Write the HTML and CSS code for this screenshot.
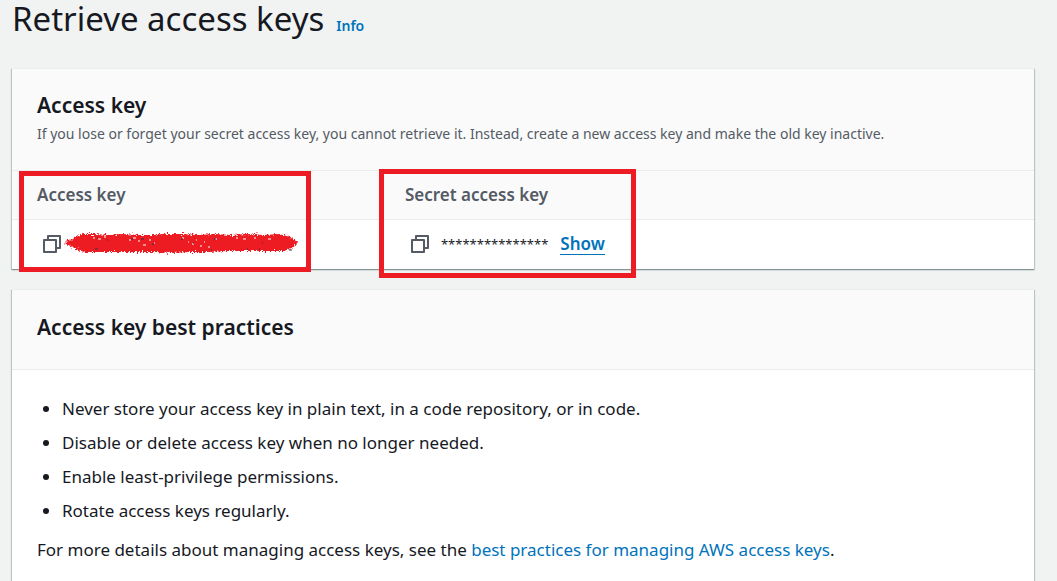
FILE: index.html
```html
<!DOCTYPE html>
<html lang="en">
<head>
<meta charset="utf-8">
<meta name="viewport" content="width=device-width, initial-scale=1">
<title>Retrieve access keys</title>
<link rel="stylesheet" href="styles.css">
</head>
<body>
<main class="page">
  <header class="page-header">
    <h1 class="page-title">Retrieve access keys</h1>
    <a class="info-link" href="#info">Info</a>
  </header>

  <section class="panel">
    <header class="panel-header">
      <h2 class="panel-title">Access key</h2>
      <p class="panel-description">If you lose or forget your secret access key, you cannot retrieve it. Instead, create a new access key and make the old key inactive.</p>
    </header>
    <table class="keys">
      <thead>
        <tr>
          <th class="key-column" scope="col">Access key<span class="highlight highlight-access"></span></th>
          <th scope="col">Secret access key<span class="highlight highlight-secret"></span></th>
        </tr>
      </thead>
      <tbody>
        <tr>
          <td>
            <div class="key-value">
              <button class="copy" type="button" aria-label="Copy access key">
                <svg class="copy-icon" viewBox="0 0 18 18" aria-hidden="true"><path d="M1 5h12v12H1zM5 5V1h12v12h-4"/></svg>
              </button>
              <svg class="redaction" viewBox="0 0 234 24" role="img" aria-label="Redacted access key">
                <defs>
                  <filter id="rough" x="-5%" y="-20%" width="110%" height="140%">
                    <feTurbulence type="fractalNoise" baseFrequency="0.6" numOctaves="2" seed="4" result="noise"/>
                    <feDisplacementMap in="SourceGraphic" in2="noise" scale="6" xChannelSelector="R" yChannelSelector="G"/>
                  </filter>
                </defs>
                <path class="ink" filter="url(#rough)" d="M1 11L4 8L9 7L13 4L20 2L30 2L45 3L58 2L75 3L88 3L100 2L118 2L135 3L150 2L168 3L182 2L200 3L214 2L224 4L231 8L233 11L229 16L220 19L200 19L180 19L163 19L145 20L125 20L108 21L90 20L70 20L52 20L35 20L20 20L12 17L5 14Z"/>
                <path class="gap" d="M29 6h2M34 7h3M40 5h2M65 8h2M69 6h3M74 9h2M79 13h3M85 8h2M90 11h1M118 6h2M124 10h1M128 12h2M132 8h1M136 14h2M140 10h1M144 15h2M151 7h2M172 6h2M179 7h3M190 6h2M204 7h3M225 17h3"/>
                <path class="speck" d="M33 6h1M43 8h1M67 7h2M77 7h3M88 12h2M31 17h3M117 7h2M129 11h1M147 18h1M150 7h2M183 17h1M195 17h1M198 11h1M225 18h3"/>
              </svg>
            </div>
          </td>
          <td>
            <div class="key-value">
              <button class="copy" type="button" aria-label="Copy secret access key">
                <svg class="copy-icon" viewBox="0 0 18 18" aria-hidden="true"><path d="M1 5h12v12H1zM5 5V1h12v12h-4"/></svg>
              </button>
              <span class="mask">***************</span>
              <button class="show" type="button">Show</button>
            </div>
          </td>
        </tr>
      </tbody>
    </table>
  </section>

  <section class="panel">
    <header class="panel-header panel-header-simple">
      <h2 class="panel-title">Access key best practices</h2>
    </header>
    <div class="panel-body">
      <ul class="practices">
        <li>Never store your access key in plain text, in a code repository, or in code.</li>
        <li>Disable or delete access key when no longer needed.</li>
        <li>Enable least-privilege permissions.</li>
        <li>Rotate access keys regularly.</li>
      </ul>
      <p class="details">For more details about managing access keys, see the <a href="#best-practices">best practices for managing AWS access keys</a>.</p>
    </div>
  </section>
</main>
</body>
</html>
```
FILE: styles.css
```css
* {
  box-sizing: border-box;
}

body {
  margin: 0;
  background: #f1f3f3;
  color: #16191f;
  font: 17px/24px "Noto Sans", "Open Sans", sans-serif;
  overflow-x: hidden;
}

h1, h2, p, ul {
  margin: 0;
}

a {
  color: #0073bb;
  text-decoration: none;
}

button {
  padding: 0;
  border: 0;
  background: none;
  font: inherit;
  cursor: pointer;
}

.page {
  display: flex;
  flex-direction: column;
  gap: 20px;
  padding: 0 23px 0 12px;
}

.page-header {
  display: flex;
  align-items: baseline;
  gap: 12px;
  padding-bottom: 10px;
}

.page-title {
  font-size: 33px;
  line-height: 38px;
  font-weight: 400;
}

.info-link {
  font-size: 14px;
  font-weight: 600;
}

.panel {
  background: #fff;
  border-top: 1px solid #eaeded;
  box-shadow: 0 1px 1px #879596, 1px 1px 1px #c4cccc, -1px 1px 1px #c4cccc;
}

.panel-header {
  padding: 21px 25px 22px;
  background: #fafafa;
  border-bottom: 1px solid #eaeded;
}

.panel-header-simple {
  padding: 22px 25px 27px;
}

.panel-title {
  font-size: 21px;
  line-height: 30px;
  font-weight: 600;
}

.panel-description {
  color: #545b64;
  font-size: 14px;
  line-height: 28px;
}

.keys {
  width: 100%;
  border-collapse: collapse;
  table-layout: fixed;
}

.key-column {
  width: 36%;
}

.keys th {
  position: relative;
  height: 48px;
  padding: 0 25px;
  background: #fafafa;
  border-bottom: 1px solid #eaeded;
  color: #545b64;
  font-weight: 600;
  text-align: left;
}

.keys td {
  height: 50px;
  padding: 0 25px;
}

.highlight {
  position: absolute;
  z-index: 1;
  border: 5px solid #ed1c24;
  pointer-events: none;
}

.highlight-access {
  top: 0;
  left: 7px;
  width: 292px;
  height: 101px;
}

.highlight-secret {
  top: -2px;
  left: -1px;
  width: 257px;
  height: 109px;
}

.key-value {
  display: flex;
  align-items: center;
  padding-left: 6px;
}

.copy,
.copy-icon {
  display: block;
  width: 18px;
  height: 18px;
}

.copy-icon {
  fill: none;
  stroke: #545b64;
  stroke-width: 2;
  stroke-linejoin: round;
}

.redaction {
  width: 234px;
  height: 24px;
  margin-left: 3px;
}

.ink {
  fill: #ed1c24;
}

.gap {
  stroke: #fff;
}

.speck {
  stroke: #28324a;
}

.mask {
  margin: 0 12px;
  font-size: 13px;
}

.show {
  border-bottom: 1px solid #0073bb;
  color: #0073bb;
  font-weight: 600;
  line-height: 20px;
}

.panel-body {
  padding: 22px 25px;
}

.practices {
  padding-left: 25px;
}

.practices li {
  padding: 5px 0;
}

.details {
  padding-top: 10px;
}
```
